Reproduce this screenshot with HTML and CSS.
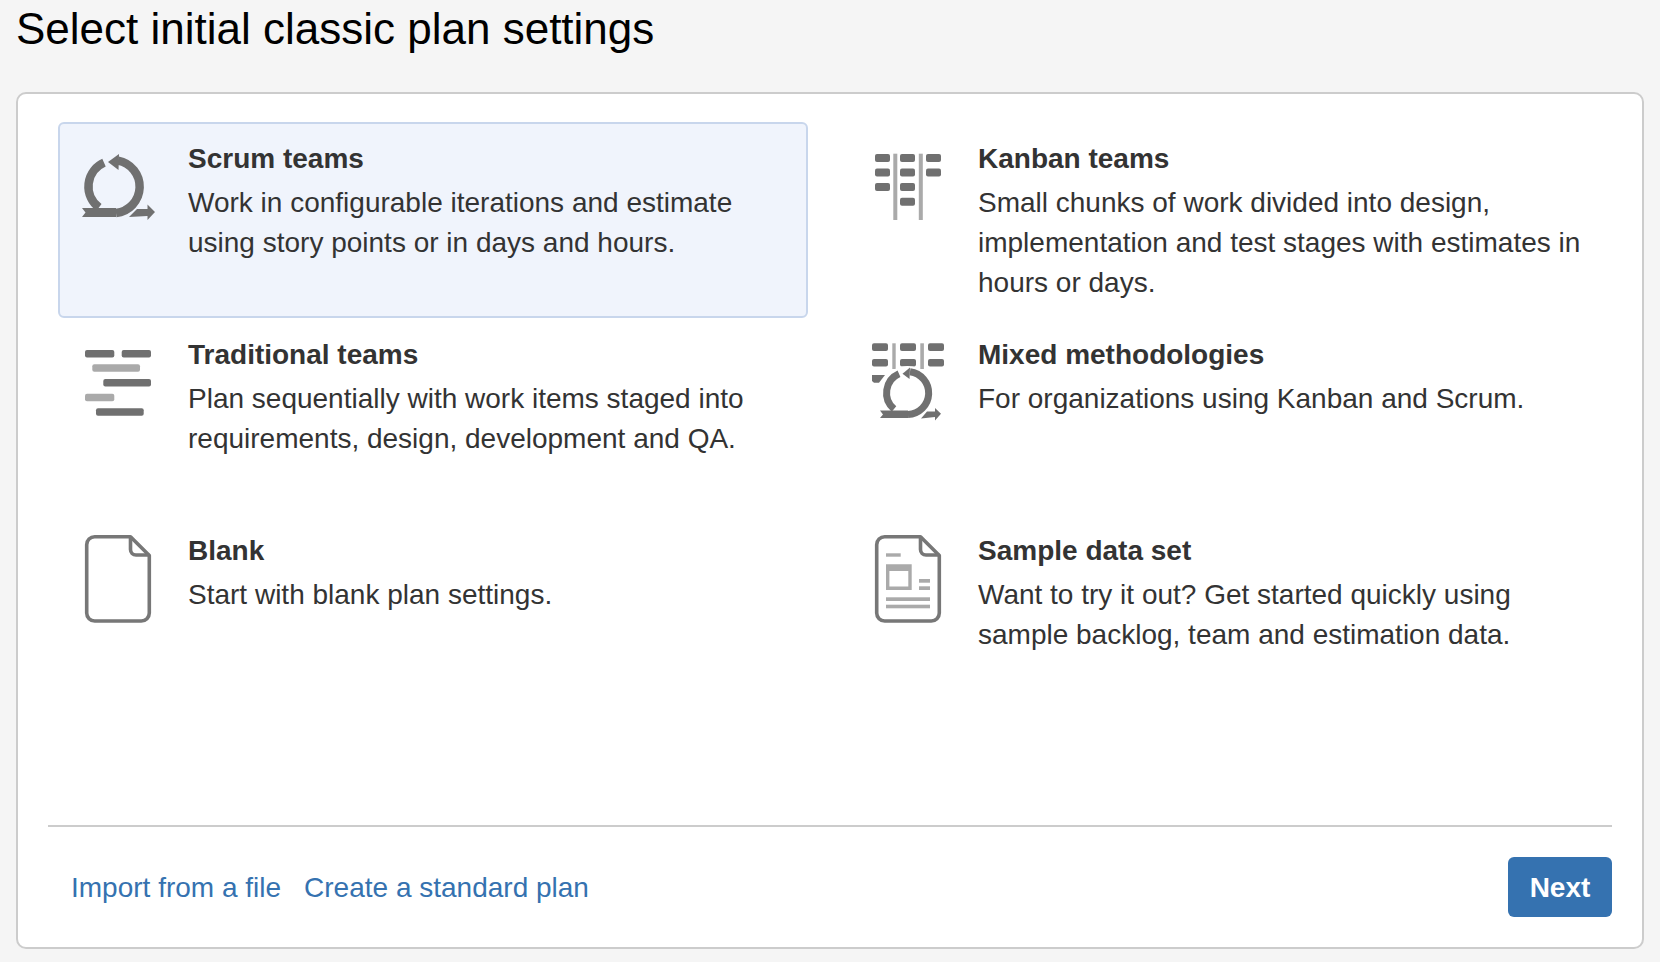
FILE: index.html
```html
<!DOCTYPE html>
<html lang="en">
<head>
    <meta charset="UTF-8">
    <title>Select initial classic plan settings</title>
    <link rel="stylesheet" href="styles.css">
</head>
<body>

<h1 class="page-title">Select initial classic plan settings</h1>

<div class="card">
    <div class="options">
        <div class="option selected">
            <svg class="option-icon" viewBox="0 -8 80 108">
                <path class="stroke-dark" d="M24 15.7A26 26 0 0 0 19 60.4"/>
                <path class="stroke-dark" d="M36 66A26.5 26.5 0 0 0 38 13.6"/>
                <polygon class="fill-dark" points="2,61 36,61 36,70 2,70 5.5,65.5"/>
                <polygon class="fill-dark" points="28,15 39,7 38.5,23"/>
                <polygon class="fill-dark" points="49,70 57,62 67.5,62 67.5,57.5 75,65 67.5,73 67.5,69"/>
            </svg>
            <div class="option-text">
                <h3>Scrum teams</h3>
                <p>Work in configurable iterations and estimate using story points or in days and hours.</p>
            </div>
        </div>
        <div class="option">
            <svg class="option-icon" viewBox="0 -8 80 108">
                <rect class="fill-dark" x="5" y="7" width="15" height="8" rx="2"/>
                <rect class="fill-dark" x="5" y="21.5" width="15" height="8" rx="2"/>
                <rect class="fill-dark" x="5" y="36" width="15" height="8" rx="2"/>
                <rect class="fill-dark" x="30" y="7" width="15" height="8" rx="2"/>
                <rect class="fill-dark" x="30" y="21.5" width="15" height="8" rx="2"/>
                <rect class="fill-dark" x="30" y="36" width="15" height="8" rx="2"/>
                <rect class="fill-dark" x="30" y="50.7" width="15" height="8" rx="2"/>
                <rect class="fill-dark" x="56" y="7" width="15" height="8" rx="2"/>
                <rect class="fill-dark" x="56" y="21.5" width="15" height="8" rx="2"/>
                <rect class="fill-light" x="23.3" y="6.7" width="4" height="66.3"/>
                <rect class="fill-light" x="48.8" y="6.7" width="4" height="66.3"/>
            </svg>
            <div class="option-text">
                <h3>Kanban teams</h3>
                <p>Small chunks of work divided into design, implementation and test stages with estimates in hours or days.</p>
            </div>
        </div>
        <div class="option">
            <svg class="option-icon" viewBox="0 -8 80 108">
                <rect class="fill-dark" x="5" y="7" width="29.3" height="7.5" rx="2"/>
                <rect class="fill-dark" x="41.7" y="7" width="29.3" height="7.5" rx="2"/>
                <rect class="fill-light" x="12.3" y="21.3" width="47.7" height="7.5" rx="2"/>
                <rect class="fill-dark" x="23.3" y="36" width="47.7" height="7.5" rx="2"/>
                <rect class="fill-light" x="5" y="50.7" width="29.3" height="7.5" rx="2"/>
                <rect class="fill-dark" x="16" y="65.3" width="47.7" height="7.5" rx="2"/>
            </svg>
            <div class="option-text">
                <h3>Traditional teams</h3>
                <p>Plan sequentially with work items staged into requirements, design, development and QA.</p>
            </div>
        </div>
        <div class="option">
            <svg class="option-icon" viewBox="0 -8 80 108">
                <rect class="fill-dark" x="2" y="0.3" width="16" height="7.7" rx="2"/>
                <rect class="fill-dark" x="30" y="0.3" width="16" height="7.7" rx="2"/>
                <rect class="fill-dark" x="58" y="0.3" width="16" height="7.7" rx="2"/>
                <rect class="fill-dark" x="2" y="16" width="16" height="7.5" rx="2"/>
                <rect class="fill-dark" x="30" y="16" width="16" height="7.5" rx="2"/>
                <rect class="fill-dark" x="58" y="16" width="16" height="7.5" rx="2"/>
                <polygon class="fill-dark" points="2,32 15,32 9,39.7 4,39.7 2,38"/>
                <rect class="fill-light" x="22.3" y="0.3" width="3.4" height="25.7"/>
                <rect class="fill-light" x="50.3" y="0.3" width="3.6" height="25.7"/>
                <circle class="stroke-halo" cx="37.5" cy="50" r="21"/>
                <path class="stroke-thin" d="M29 30.8A21 21 0 0 0 24 66"/>
                <path class="stroke-thin" d="M38 71.5A21.5 21.5 0 0 0 40 28.7"/>
                <polygon class="fill-dark" points="10,67.5 38,67.5 38,75 10,75 13,71.5"/>
                <polygon class="fill-dark" points="32.5,30.7 40,24.5 39.5,36"/>
                <polygon class="fill-dark" points="51,75.5 57,68.5 65,68.5 65,65 71,70.7 65,77.5 65,74"/>
            </svg>
            <div class="option-text">
                <h3>Mixed methodologies</h3>
                <p>For organizations using Kanban and Scrum.</p>
            </div>
        </div>
        <div class="option">
            <svg class="option-icon" viewBox="0 -8 80 108">
                <path class="stroke-doc" d="M14.7 -2.3H50.5L69.3 16.5V74A8 8 0 0 1 61.3 82H14.7A8 8 0 0 1 6.7 74V5.7A8 8 0 0 1 14.7 -2.3Z"/>
                <path class="stroke-doc" d="M50.5 -2.3V10.5A5.5 5.5 0 0 0 56 16H69.3"/>
            </svg>
            <div class="option-text">
                <h3>Blank</h3>
                <p>Start with blank plan settings.</p>
            </div>
        </div>
        <div class="option">
            <svg class="option-icon" viewBox="0 -8 80 108">
                <path class="stroke-doc" d="M14.7 -2.3H50.5L69.3 16.5V74A8 8 0 0 1 61.3 82H14.7A8 8 0 0 1 6.7 74V5.7A8 8 0 0 1 14.7 -2.3Z"/>
                <path class="stroke-doc" d="M50.5 -2.3V10.5A5.5 5.5 0 0 0 56 16H69.3"/>
                <rect class="fill-light" x="16" y="14.3" width="14.7" height="3.4"/>
                <path class="fill-light" d="M16 25.3H41.7V51H16ZM19.4 32V47.6H38.3V32Z" fill-rule="evenodd"/>
                <rect class="fill-light" x="49" y="40" width="11" height="3.7"/>
                <rect class="fill-light" x="49" y="47.3" width="11" height="3.7"/>
                <rect class="fill-light" x="16" y="58.3" width="44" height="3.7"/>
                <rect class="fill-light" x="16" y="65.7" width="44" height="3.6"/>
            </svg>
            <div class="option-text">
                <h3>Sample data set</h3>
                <p>Want to try it out? Get started quickly using sample backlog, team and estimation data.</p>
            </div>
        </div>
    </div>

    <div class="card-footer">
        <div class="footer-links">
            <a href="#">Import from a file</a>
            <a href="#">Create a standard plan</a>
        </div>
        <button class="next-button">Next</button>
    </div>
</div>

</body>
</html>
```

FILE: styles.css
```css
html, body {
    height: 100%;
}
body {
    background-color: #f5f5f5;
    color: #333;
    font-family: "Liberation Sans", Arial, sans-serif;
    font-size: 28px;
    line-height: 40px;
    margin: 0;
    padding: 0 16px;
    box-sizing: border-box;
    overflow: hidden;
}
.page-title {
    color: #000;
    font-size: 44px;
    font-weight: normal;
    line-height: 58px;
    margin: 0;
    padding-bottom: 34px;
}
.card {
    background: #fff;
    border: 2px solid #ccc;
    border-radius: 10px;
    box-sizing: border-box;
    display: flex;
    flex-direction: column;
    height: 857px;
    padding: 28px 30px 0;
}
/* Six plan types, two columns */
.options {
    display: grid;
    grid-template-columns: 750px 1fr;
    grid-auto-rows: 196px;
    column-gap: 40px;
    margin: 0 10px;
}
.option {
    display: flex;
    gap: 28px;
    border: 2px solid transparent;
    border-radius: 6px;
    padding: 15px 10px 0 20px;
}
.option.selected {
    background: #f0f4fc;
    border-color: #c8d6ec;
}
.option-icon {
    flex: none;
    width: 80px;
    height: 108px;
}
.option-text h3 {
    font-size: 28px;
    font-weight: bold;
    line-height: 40px;
    margin: 0 0 4px;
}
.option-text p {
    margin: 0;
}
.fill-dark {
    fill: #707070;
}
.fill-light {
    fill: #aaa;
}
.stroke-dark {
    fill: none;
    stroke: #707070;
    stroke-width: 8.5;
}
.stroke-thin {
    fill: none;
    stroke: #707070;
    stroke-width: 7;
}
.stroke-halo {
    fill: none;
    stroke: #fff;
    stroke-width: 12;
}
.stroke-doc {
    fill: none;
    stroke: #777;
    stroke-width: 3.6;
    stroke-linejoin: round;
}
/* Footer */
.card-footer {
    display: flex;
    justify-content: space-between;
    align-items: center;
    margin-top: auto;
    border-top: 2px solid #ccc;
    padding: 30px 0 30px;
}
.footer-links {
    display: flex;
    gap: 23px;
    padding: 2px 0 0 23px;
}
.footer-links a {
    color: #3572b0;
    text-decoration: none;
}
.next-button {
    background: #3572b0;
    border: none;
    border-radius: 6px;
    color: #fff;
    font-family: inherit;
    font-size: 28px;
    font-weight: bold;
    width: 104px;
    height: 60px;
    padding: 2px 0 0;
    cursor: pointer;
}
```
